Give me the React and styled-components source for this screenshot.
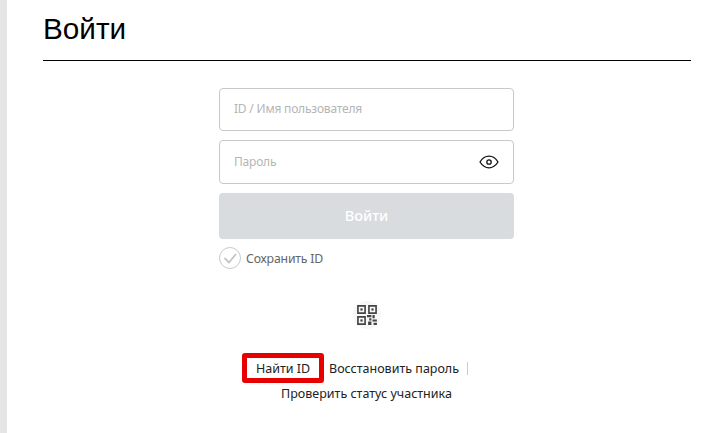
import React from 'react';
import styled, { createGlobalStyle } from 'styled-components';

const Global = createGlobalStyle`
  html, body { margin: 0; padding: 0; background: #fff; }
  body { font-family: "Noto Sans", "Open Sans", sans-serif; overflow: hidden; }
`;
const Page = styled.div`
  width: 724px; height: 433px; box-sizing: border-box;
  border-left: 7px solid #e5e5e5; padding: 0 33px 0 36px; overflow: hidden;
`;
const Header = styled.header`
  height: 61px; box-sizing: border-box; border-bottom: 1px solid #000; margin-bottom: 27px;
`;
const Title = styled.h1`
  margin: 0; padding-top: 10px;
  font: 400 29.7px/37px "Liberation Sans", Arial, sans-serif; color: #000;
`;
const Form = styled.main`
  width: 295px; margin-left: 176px; display: flex; flex-direction: column;
`;
const Field = styled.div`
  height: ${p => p.$h}px; box-sizing: border-box; margin-bottom: 9px;
  border: 1px solid #c9c9c9; border-radius: 4px; padding: 0 14px;
  display: flex; align-items: center; justify-content: space-between;
  font-size: 12px; letter-spacing: -0.2px; color: #b5b5b5;
`;
const Placeholder = styled.span`
  padding-bottom: 2px;
`;
const Submit = styled.div`
  height: 46px; box-sizing: border-box; padding-bottom: 2px; border-radius: 4px; background: #d8dcde; color: #fff;
  display: flex; align-items: center; justify-content: center;
  font-size: 14.5px; font-weight: 500;
`;
const Remember = styled.div`
  display: flex; align-items: center; gap: 5px; margin-top: 8px;
  font-size: 12.3px; letter-spacing: -0.2px; color: #666;
`;
const Qr = styled.div`
  width: 28px; height: 28px; margin: 32px auto 0; border-radius: 50%; background: #f7f7f7;
  display: flex; align-items: center; justify-content: center;
`;
const Links = styled.nav`
  display: flex; flex-direction: column; align-items: center; margin-top: 24px;
  font-size: 12.5px; color: #222;
`;
const LinkRow = styled.div`
  display: flex; align-items: center; height: 30px; width: 295px; padding-left: 23px; box-sizing: border-box;
`;
const Found = styled.span`
  height: 30px; width: 82px; box-sizing: border-box; border: 5px solid #e60000; border-radius: 3px;
  display: flex; align-items: center; justify-content: center;
`;
const Restore = styled.span`
  margin-left: 5px; padding-right: 8px; border-right: 1px solid #ccc; line-height: 13px; white-space: nowrap;
`;
const Status = styled.div`
  height: 21px; line-height: 21px; white-space: nowrap;
`;

const Eye = () => (
  <svg width="20" height="14" viewBox="0 0 20 14" fill="none" stroke="#111" strokeWidth="1.3">
    <path d="M1 7C3.5 3 6.5 1.200 10 1.200S16.500 3 19 7c-2.500 4-5.500 5.800-9 5.800S3.500 11 1 7Z" />
    <circle cx="10" cy="7" r="2.200" />
  </svg>
);
const Check = () => (
  <svg width="22" height="22" viewBox="0 0 22 22" fill="none">
    <circle cx="11" cy="11" r="10.500" stroke="#c9c9c9" />
    <path d="M5.500 11l4.500 4.500 7-8.500" stroke="#c4c4c4" strokeWidth="1.800" />
  </svg>
);
const QrIcon = () => (
  <svg width="22" height="22" viewBox="0 0 20 20" fill="#444">
    <path fillRule="evenodd" d="M1 1h8v8H1ZM2.500 2.500v5h5v-5ZM1 11h8v8H1ZM2.500 12.500v5h5v-5ZM11 1h8v8h-8ZM12.500 2.500v5h5v-5Z" />
    <rect x="4" y="4" width="2" height="2" />
    <rect x="4" y="14" width="2" height="2" />
    <rect x="14" y="4" width="2" height="2" />
    <path d="M10 10h4v2h-4ZM15 10h2v3h-2ZM12 13h2v2h-2ZM15 14h4v2h-4ZM11 16h3v3h-3ZM16 17h3v2h-3Z" />
  </svg>
);

export default function App() {
  return (
    <Page>
      <Global />
      <Header><Title>Войти</Title></Header>
      <Form>
        <Field $h={43}><Placeholder>ID / Имя пользователя</Placeholder></Field>
        <Field $h={44}><Placeholder>Пароль</Placeholder><Eye /></Field>
        <Submit>Войти</Submit>
        <Remember><Check />Сохранить ID</Remember>
        <Qr><QrIcon /></Qr>
        <Links>
          <LinkRow><Found>Найти ID</Found><Restore>Восстановить пароль</Restore></LinkRow>
          <Status>Проверить статус участника</Status>
        </Links>
      </Form>
    </Page>
  );
}
